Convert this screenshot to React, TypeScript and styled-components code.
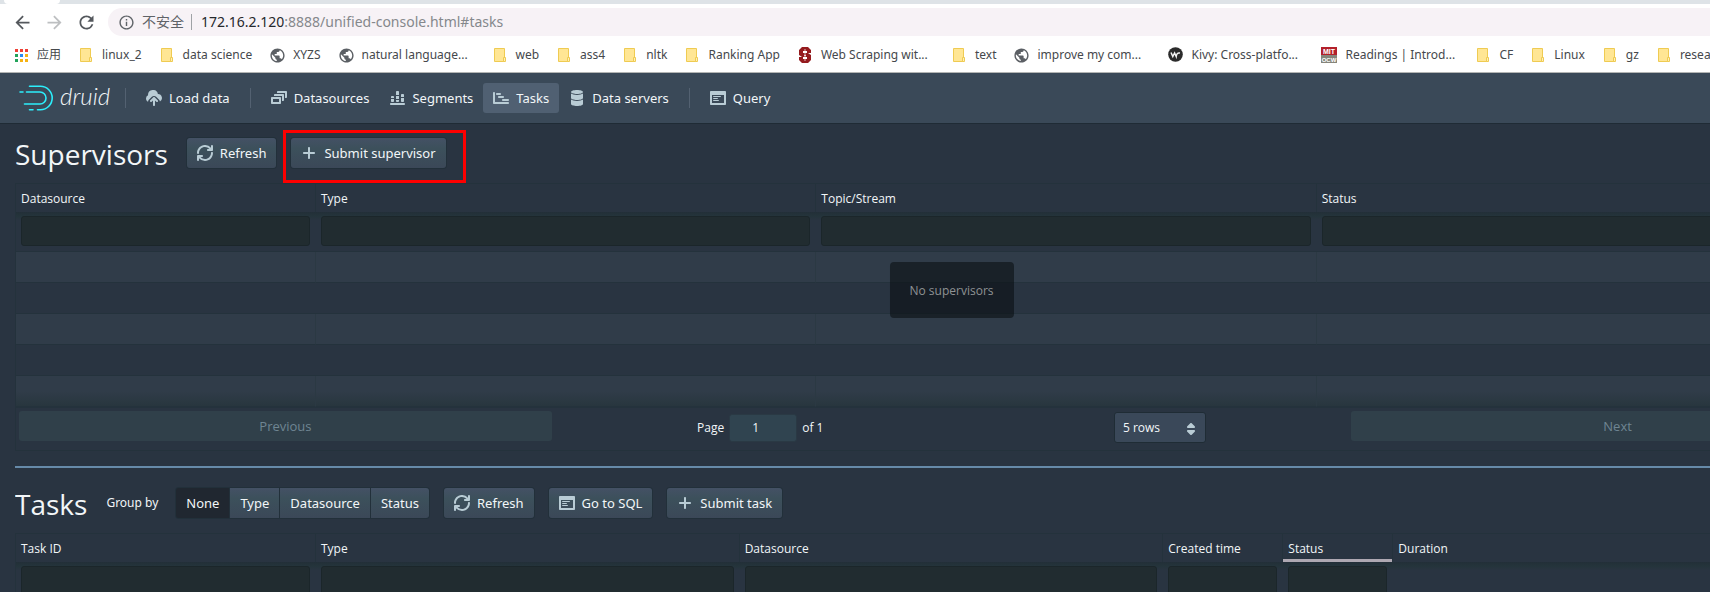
import React from "react";
import styled, { createGlobalStyle, css } from "styled-components";
import { MdArrowBack, MdArrowForward, MdInfoOutline, MdPublic, MdRefresh } from "react-icons/md";

const color = {
  page: "#293441",
  nav: "#3a4958",
  line: "#24323c",
  stripe: "#303c49",
  field: "#212c30",
  icon: "#b9ccd5",
  text: "#f2f6f8",
};

const GlobalStyle = createGlobalStyle`
  *, *::before, *::after { box-sizing: border-box; }
  body {
    margin: 0;
    background: ${color.page};
    color: ${color.text};
    font-family: "Noto Sans", "Noto Sans CJK SC", sans-serif;
    font-size: 13px;
    line-height: 18px;
  }
  button, input, select { font: inherit; color: inherit; margin: 0; }
  a { color: inherit; text-decoration: none; }
  svg { display: block; flex: none; }
`;

const Page = styled.div`
  height: 100vh;
  display: flex;
  flex-direction: column;
  overflow: hidden;
`;

/* ---------- browser chrome ---------- */

const TabStrip = styled.div`
  height: 4px;
  flex: none;
  background: #dee3e7;
  padding-left: 4px;
`;

const ActiveTab = styled.div`
  width: 56px;
  height: 4px;
  background: #fff;
  border-radius: 0 0 4px 4px;
`;

const AddressRow = styled.div`
  display: flex;
  flex: none;
  align-items: center;
  gap: 10px;
  background: #fff;
  padding: 4px 0 0 11px;
`;

const ChromeButton = styled.button<{ $muted?: boolean }>`
  width: 22px;
  height: 22px;
  padding: 0;
  border: 0;
  background: none;
  display: grid;
  place-items: center;
  color: ${(p) => (p.$muted ? "#bdbfc1" : "#54585d")};
`;

const AddressPill = styled.div`
  flex: 1;
  height: 28px;
  margin-left: 1px;
  padding-left: 10px;
  border-radius: 14px 0 0 14px;
  background: #f7f2f6;
  display: flex;
  align-items: center;
  font-size: 14px;
  line-height: 20px;
  color: #85888c;
  white-space: nowrap;
`;

const Security = styled.span`
  display: flex;
  align-items: center;
  gap: 7px;
  color: #5f6368;
  padding-right: 7px;
  border-right: 1px solid #9fa2a6;
  margin-right: 9px;
  height: 16px;
`;

const Host = styled.span`
  color: #25282c;
`;

const BookmarkBar = styled.nav`
  flex: none;
  display: flex;
  align-items: center;
  gap: 17px;
  height: 37px;
  padding: 1px 0 0 13px;
  overflow: hidden;
  background: #fff;
  border-bottom: 1px solid #b3b5b4;
  color: #45484c;
  font-size: 12px;
  white-space: nowrap;
`;

const Bookmark = styled.a<{ $long?: boolean }>`
  flex: none;
  display: flex;
  align-items: center;
  gap: 8px;
  ${(p) => p.$long && css`width: 137px;`}
`;

const BookmarkIcon = styled.span`
  width: 16px;
  height: 16px;
  display: grid;
  place-items: center;
  color: #5b5f64;
`;

const FolderIcon = () => (
  <svg width="12" height="14" viewBox="0 0 12 14">
    <path d="M.5.5h10v13H.5z" fill="#ffe694" stroke="#efcb52" />
    <path d="M9.5 9.5h2v4h-2z" fill="#fff0b8" stroke="#efcb52" />
  </svg>
);

const AppsIcon = () => (
  <svg width="14" height="14" viewBox="0 0 14 14">
    {["#ee4035", "#ee4035", "#ee4035", "#21a35a", "#2a8bf2", "#f6b213", "#21a35a", "#f6b213", "#f6b213"].map((c, i) => (
      <rect key={i} x={(i % 3) * 5 + 1} y={Math.floor(i / 3) * 5 + 1} width="3" height="3" fill={c} />
    ))}
  </svg>
);

const StanfordIcon = () => (
  <svg width="12" height="16" viewBox="0 0 12 16">
    <path d="M3 0h6l3 3v3H8V4H4v2h5l3 2v5l-3 3H3l-3-3v-3h4v2h4v-2H3L0 8V3z" fill="#951b1e" />
    <path d="M6 2v12M5 6l1-1 1 1M5 9l1-1 1 1" stroke="#fff" strokeWidth=".7" fill="none" />
  </svg>
);

const KivyIcon = () => (
  <svg width="15" height="15" viewBox="0 0 15 15">
    <circle cx="7.500" cy="7.500" r="7.300" fill="#2b2b2b" />
    <path d="M3 5.500l1.800 4 1.800-3.500 1.600 3.500c.4-3 1.500-4 3.800-3.500" stroke="#f4f4f4" strokeWidth="1.500" fill="none" />
  </svg>
);

const MitIcon = () => (
  <svg width="16" height="16" viewBox="0 0 16 16" fontFamily="Liberation Sans, sans-serif" fontWeight="700" fontSize="7">
    <rect width="16" height="8" fill="#b3202b" />
    <rect y="8" width="16" height="8" fill="#85857b" />
    <text x="8" y="6.500" textAnchor="middle" fill="#fff">MIT</text>
    <text x="8" y="14.500" textAnchor="middle" fontSize="6" fill="#fff">OCW</text>
  </svg>
);

const GlobeIcon = () => <MdPublic size={17} />;

const bookmarks: { label: string; icon: React.FC; long?: boolean }[] = [
  { label: "应用", icon: AppsIcon },
  { label: "linux_2", icon: FolderIcon },
  { label: "data science", icon: FolderIcon },
  { label: "XYZS", icon: GlobeIcon },
  { label: "natural language...", icon: GlobeIcon, long: true },
  { label: "web", icon: FolderIcon },
  { label: "ass4", icon: FolderIcon },
  { label: "nltk", icon: FolderIcon },
  { label: "Ranking App", icon: FolderIcon },
  { label: "Web Scraping wit...", icon: StanfordIcon, long: true },
  { label: "text", icon: FolderIcon },
  { label: "improve my com...", icon: GlobeIcon, long: true },
  { label: "Kivy: Cross-platfo...", icon: KivyIcon, long: true },
  { label: "Readings | Introd...", icon: MitIcon, long: true },
  { label: "CF", icon: FolderIcon },
  { label: "Linux", icon: FolderIcon },
  { label: "gz", icon: FolderIcon },
  { label: "resea", icon: FolderIcon },
];

/* ---------- icons ---------- */

const iconPaths = {
  upload:
    "M8.710 7.290C8.530 7.110 8.280 7 8 7s-.53.11-.71.29l-3 3a1.003 1.003 0 0 0 1.420 1.420L7 10.410V15c0 .55.45 1 1 1s1-.45 1-1v-4.590l1.290 1.290c.18.19.43.3.71.3a1.003 1.003 0 0 0 .71-1.710l-3-3zM12 4h-.1A5 5 0 0 0 2 5c0 .11.01.22.02.33A3.495 3.495 0 0 0 0 8.500c0 1.410.84 2.610 2.030 3.170.1-.8.45-1.400.85-1.800l3-3C6.440 6.310 7.170 6 8 6s1.560.31 2.120.87l3 3c.4.4.7.95.82 1.600A4 4 0 0 0 12 4z",
  layers:
    "M12 3.980H4c-.55 0-1 .45-1 1v1h8v5h1c.55 0 1-.45 1-1v-5c0-.55-.45-1-1-1zm3-3H7c-.55 0-1 .45-1 1v1h8v5h1c.55 0 1-.45 1-1v-5c0-.55-.45-1-1-1zm-6 6H1c-.55 0-1 .45-1 1v5c0 .55.45 1 1 1h8c.55 0 1-.45 1-1v-5c0-.55-.45-1-1-1zm-1 5H2v-3h6v3z",
  chart:
    "M10 2c0-.55-.45-1-1-1H8c-.55 0-1 .45-1 1v3h3V2zm3 10h1c.55 0 1-.45 1-1V8h-3v3c0 .55.45 1 1 1zm2-7c0-.55-.45-1-1-1h-1c-.55 0-1 .45-1 1v2h3V5zm-5 1H7v3h3V6zM5 7c0-.55-.45-1-1-1H3c-.55 0-1 .45-1 1v1h3V7zm3 5h1c.55 0 1-.45 1-1v-1H7v1c0 .55.45 1 1 1zm7 1H2c-.55 0-1 .45-1 1s.45 1 1 1h13c.55 0 1-.45 1-1s-.45-1-1-1zM3 12h1c.55 0 1-.45 1-1V9H2v2c0 .55.45 1 1 1z",
  gantt:
    "M4 5h3c.55 0 1-.45 1-1s-.45-1-1-1H4c-.55 0-1 .45-1 1s.45 1 1 1zm2 3h4c.55 0 1-.45 1-1s-.45-1-1-1H6c-.55 0-1 .45-1 1s.45 1 1 1zm4 1c-.55 0-1 .45-1 1s.45 1 1 1h5c.55 0 1-.45 1-1s-.45-1-1-1h-5zm5 3H2V3c0-.55-.45-1-1-1s-1 .45-1 1v10c0 .55.45 1 1 1h14c.55 0 1-.45 1-1s-.45-1-1-1z",
  database:
    "M8 4c3.310 0 6-.9 6-2s-2.690-2-6-2C4.680 0 2 .9 2 2s2.680 2 6 2zm-6-.48V8c0 1.100 2.690 2 6 2s6-.9 6-2V3.520C12.780 4.400 10.560 5 8 5s-4.780-.6-6-1.480zM2 9.520V14c0 1.100 2.690 2 6 2s6-.9 6-2V9.520C12.780 10.400 10.560 11 8 11s-4.780-.6-6-1.480z",
  application:
    "M3.500 7h7c.28 0 .5-.22.5-.5s-.22-.5-.5-.5h-7c-.28 0-.5.22-.5.5s.22.5.5.5zM15 1H1c-.55 0-1 .45-1 1v12c0 .55.45 1 1 1h14c.55 0 1-.45 1-1V2c0-.55-.45-1-1-1zm-1 12H2V5h12v8zM3.500 9h4c.28 0 .5-.22.5-.5S7.780 8 7.500 8h-4c-.28 0-.5.22-.5.5s.22.5.5.5zm0 2h5c.28 0 .5-.22.5-.5s-.22-.5-.5-.5h-5c-.28 0-.5.22-.5.5s.22.5.5.5z",
  refresh:
    "M14.990 6.990c-.55 0-1 .45-1 1 0 3.310-2.690 6-6 6-1.770 0-3.360-.78-4.460-2h1.460c.55 0 1-.45 1-1s-.45-1-1-1h-4c-.55 0-1 .45-1 1v4c0 .55.45 1 1 1s1-.45 1-1v-1.740a7.950 7.950 0 0 0 6 2.740c4.420 0 8-3.580 8-8 0-.55-.45-1-1-1zm0-7c-.55 0-1 .45-1 1v1.740a7.950 7.950 0 0 0-6-2.740c-4.420 0-8 3.580-8 8 0 .55.45 1 1 1s1-.45 1-1c0-3.310 2.690-6 6-6 1.770 0 3.360.78 4.460 2h-1.460c-.55 0-1 .45-1 1s.45 1 1 1h4c.55 0 1-.45 1-1v-4c0-.55-.45-1-1-1z",
  plus:
    "M13 7H9V3c0-.55-.45-1-1-1s-1 .45-1 1v4H3c-.55 0-1 .45-1 1s.45 1 1 1h4v4c0 .55.45 1 1 1s1-.45 1-1V9h4c.55 0 1-.45 1-1s-.45-1-1-1z",
  carets:
    "M5 7h6c.55 0 1-.45 1-1 0-.28-.11-.53-.29-.71l-3-3C8.530 2.110 8.280 2 8 2s-.53.11-.71.29l-3 3C4.110 5.470 4 5.720 4 6c0 .55.45 1 1 1zm6 2H5c-.55 0-1 .45-1 1 0 .28.11.53.29.71l3 3c.18.18.43.29.71.29s.53-.11.71-.29l3-3c.18-.18.29-.43.29-.71 0-.55-.45-1-1-1z",
};

const Icon = ({ name }: { name: keyof typeof iconPaths }) => (
  <svg width="16" height="16" viewBox="0 0 16 16" fill={color.icon} aria-hidden="true">
    <path d={iconPaths[name]} />
  </svg>
);

/* ---------- console header ---------- */

const Console = styled.div`
  flex: 1;
  min-height: 0;
  min-width: 1903px;
  display: flex;
  flex-direction: column;
`;

const NavBar = styled.nav`
  flex: none;
  display: flex;
  align-items: center;
  height: 51px;
  padding-left: 18px;
  background: ${color.nav};
  border-bottom: 1px solid #1f2b35;
`;

const Brand = styled.a`
  display: flex;
  align-items: center;
  width: 97px;
  gap: 6px;
  font-family: Lato, "Open Sans", sans-serif;
  font-weight: 300;
  font-style: italic;
  font-size: 24px;
  line-height: 28px;
`;

const BrandName = styled.span`
  padding-bottom: 4px;
`;

const NavItem = styled.a<{ $active?: boolean }>`
  display: flex;
  align-items: center;
  gap: 7px;
  height: 30px;
  padding: 0 10px;
  border-radius: 3px;
  background: ${(p) => (p.$active ? "#506072" : "transparent")};
`;

const NavDivider = styled.span`
  width: 1px;
  height: 20px;
  margin: 0 10px;
  background: #536171;
`;

const Logo = () => (
  <svg width="36" height="28" viewBox="0 0 36 28" fill="none" stroke="#2ceefb" strokeWidth="1.600" strokeLinecap="round">
    <path d="M11.500 2.300H22.500a11.700 11.700 0 0 1 0 23.400H19.500M11.500 25.700h3.500" />
    <path d="M2 8h3M8.500 8H22a6 6 0 0 1 0 12H6.500" />
  </svg>
);

/* ---------- panes ---------- */

const SupervisorPane = styled.section`
  flex: none;
  margin: 0 15px;
  padding: 14px 0 15px;
  border-bottom: 2px solid #668aa9;
`;

const TaskPane = styled.section`
  flex: 1;
  min-height: 0;
  overflow: hidden;
  margin: 0 15px;
  padding-top: 20px;
`;

const Controls = styled.header`
  display: flex;
  align-items: center;
  gap: 15px;
  height: 30px;
  margin-bottom: 15px;
`;

const Title = styled.h1`
  margin: 0;
  padding: 2px 4px 0 0;
  font-family: "Open Sans", sans-serif;
  font-size: 28px;
  line-height: 32px;
  font-weight: 400;
`;

const GroupLabel = styled.span`
  padding-right: 3px;
  font-size: 12px;
`;

const raised = css`
  background: linear-gradient(#445165, #3c505b 35%, #3b4858);
  box-shadow: 0 0 0 1px #22303a;
`;

const Button = styled.button`
  display: flex;
  align-items: center;
  gap: 7px;
  height: 30px;
  padding: 0 10px;
  border: 0;
  border-radius: 3px;
  white-space: nowrap;
  ${raised}
`;

const ButtonGroup = styled.div`
  display: flex;
  gap: 1px;
  border-radius: 3px;
  background: #22303a;
  box-shadow: 0 0 0 1px #22303a;
`;

const GroupButton = styled.button<{ $active?: boolean }>`
  height: 30px;
  padding: 0 10px;
  border: 0;
  background: ${(p) => (p.$active ? "#202730" : "linear-gradient(#445165, #3c505b 35%, #3b4858)")};
  &:first-child { border-radius: 3px 0 0 3px; }
  &:last-child { border-radius: 0 3px 3px 0; }
`;

const Highlighted = styled.div`
  position: relative;
  &::after {
    content: "";
    position: absolute;
    z-index: 2;
    top: -8px;
    right: -20px;
    bottom: -15px;
    left: -8px;
    border: 3px solid #fe0000;
    pointer-events: none;
  }
`;

/* ---------- tables ---------- */

const TableFrame = styled.div`
  position: relative;
  border: 1px solid ${color.line};
  font-family: "Open Sans", sans-serif;
`;

const Table = styled.table`
  width: 100%;
  table-layout: fixed;
  border-collapse: separate;
  border-spacing: 0;
`;

const HeadCell = styled.th<{ $sorted?: boolean }>`
  height: 28px;
  padding: 2px 5px 0;
  border-right: 1px solid ${color.line};
  box-shadow: ${(p) => (p.$sorted ? "inset 0 -3px #aea8b2" : "none")};
  font-size: 12px;
  font-weight: 400;
  text-align: left;
`;

const FilterCell = styled.td`
  height: 40px;
  padding: 4px 6px 4px 5px;
  border-bottom: 1px solid ${color.line};
  background: linear-gradient(#222f38, #24343b 4px, ${color.page} 8px);
  vertical-align: top;
`;

const FilterInput = styled.input`
  display: block;
  width: 100%;
  height: 30px;
  padding: 0 10px;
  border: 1px solid #1b262a;
  border-radius: 3px;
  background: ${color.field};
`;

const BodyRow = styled.tr`
  &:nth-child(odd) { background: ${color.stripe}; }
  &:nth-child(odd) td { border-right: 1px solid #2b3943; }
  &:last-child td { background: linear-gradient(transparent 50%, #28363e); }
`;

const BodyCell = styled.td`
  height: 31px;
  padding: 0;
  border-bottom: 1px solid ${color.line};
`;

const EmptyNotice = styled.div`
  position: absolute;
  top: 78px;
  left: 50%;
  transform: translateX(-50%);
  padding: 20px 20px 18px;
  border-radius: 4px;
  background: rgba(8, 14, 18, 0.58);
  color: #8f9294;
  font-size: 12px;
`;

const Pagination = styled.footer`
  display: flex;
  padding: 3px 3px 7px;
  border-top: 1px solid ${color.line};
`;

const PageButton = styled.button`
  flex: 1;
  height: 30px;
  padding: 0;
  border: 0;
  border-radius: 3px;
  background: #30404a;
  color: #6f8592;
`;

const PageControls = styled.div`
  flex: 1.5;
  display: flex;
  align-items: center;
  justify-content: space-around;
  font-size: 12px;
  padding-top: 1px;
`;

const PageInfo = styled.label`
  display: flex;
  align-items: center;
  gap: 5px;
`;

const PageInput = styled.input`
  width: 68px;
  height: 28px;
  padding: 0;
  border: 1px solid #2a3944;
  border-radius: 3px;
  background: #304450;
  text-align: center;
`;

const SelectBox = styled.label`
  position: relative;
  svg {
    position: absolute;
    top: 9px;
    right: 7px;
    pointer-events: none;
  }
`;

const Select = styled.select`
  display: block;
  appearance: none;
  width: 92px;
  height: 31px;
  padding: 1px 25px 0 8px;
  border: 1px solid #1f2c35;
  border-radius: 3px;
  background: #3a4859;
`;

interface Column {
  title: string;
  width?: number;
  filter?: boolean;
  sorted?: boolean;
}

const supervisorColumns: Column[] = [
  { title: "Datasource", width: 300, filter: true },
  { title: "Type", filter: true },
  { title: "Topic/Stream", filter: true },
  { title: "Status", filter: true },
  { title: "", width: 70 },
];

const taskColumns: Column[] = [
  { title: "Task ID", width: 300, filter: true },
  { title: "Type", filter: true },
  { title: "Datasource", filter: true },
  { title: "Created time", width: 120, filter: true },
  { title: "Status", width: 110, filter: true, sorted: true },
  { title: "Duration" },
  { title: "", width: 70 },
];

const DataTable = ({ columns, rows }: { columns: Column[]; rows: number }) => (
  <Table>
    <colgroup>
      {columns.map((c, i) => (
        <col key={i} width={c.width} />
      ))}
    </colgroup>
    <thead>
      <tr>
        {columns.map((c, i) => (
          <HeadCell key={i} scope="col" $sorted={c.sorted}>
            {c.title}
          </HeadCell>
        ))}
      </tr>
      <tr>
        {columns.map((c, i) => (
          <FilterCell key={i}>{c.filter && <FilterInput type="text" aria-label={`Filter ${c.title}`} />}</FilterCell>
        ))}
      </tr>
    </thead>
    <tbody>
      {Array.from({ length: rows }, (_, r) => (
        <BodyRow key={r}>
          {columns.map((c, i) => (
            <BodyCell key={i} />
          ))}
        </BodyRow>
      ))}
    </tbody>
  </Table>
);

export default function App() {
  return (
    <Page>
      <GlobalStyle />
      <TabStrip>
        <ActiveTab />
      </TabStrip>
      <AddressRow>
        <ChromeButton aria-label="Back">
          <MdArrowBack size={21} />
        </ChromeButton>
        <ChromeButton aria-label="Forward" $muted>
          <MdArrowForward size={21} />
        </ChromeButton>
        <ChromeButton aria-label="Reload">
          <MdRefresh size={21} />
        </ChromeButton>
        <AddressPill>
          <Security>
            <MdInfoOutline size={17} />
            不安全
          </Security>
          <Host>172.16.2.120</Host>:8888/unified-console.html#tasks
        </AddressPill>
      </AddressRow>
      <BookmarkBar aria-label="Bookmarks">
        {bookmarks.map(({ label, icon: Glyph, long }) => (
          <Bookmark key={label} href="#" $long={long}>
            <BookmarkIcon>
              <Glyph />
            </BookmarkIcon>
            {label}
          </Bookmark>
        ))}
      </BookmarkBar>
      <Console>
        <NavBar>
          <Brand href="#">
            <Logo />
            <BrandName>druid</BrandName>
          </Brand>
          <NavDivider />
          <NavItem href="#load-data"><Icon name="upload" />Load data</NavItem>
          <NavDivider />
          <NavItem href="#datasources"><Icon name="layers" />Datasources</NavItem>
          <NavItem href="#segments"><Icon name="chart" />Segments</NavItem>
          <NavItem href="#tasks" $active><Icon name="gantt" />Tasks</NavItem>
          <NavItem href="#servers"><Icon name="database" />Data servers</NavItem>
          <NavDivider />
          <NavItem href="#query"><Icon name="application" />Query</NavItem>
        </NavBar>
        <SupervisorPane>
          <Controls>
            <Title>Supervisors</Title>
            <Button><Icon name="refresh" />Refresh</Button>
            <Highlighted>
              <Button><Icon name="plus" />Submit supervisor</Button>
            </Highlighted>
          </Controls>
          <TableFrame>
            <DataTable columns={supervisorColumns} rows={5} />
            <EmptyNotice>No supervisors</EmptyNotice>
            <Pagination>
              <PageButton disabled>Previous</PageButton>
              <PageControls>
                <PageInfo>
                  Page
                  <PageInput type="number" defaultValue={1} />
                  of 1
                </PageInfo>
                <SelectBox>
                  <Select aria-label="Rows per page" defaultValue="5">
                    <option value="5">5 rows</option>
                    <option value="10">10 rows</option>
                    <option value="20">20 rows</option>
                  </Select>
                  <Icon name="carets" />
                </SelectBox>
              </PageControls>
              <PageButton disabled>Next</PageButton>
            </Pagination>
          </TableFrame>
        </SupervisorPane>
        <TaskPane>
          <Controls>
            <Title>Tasks</Title>
            <GroupLabel>Group by</GroupLabel>
            <ButtonGroup>
              <GroupButton $active>None</GroupButton>
              <GroupButton>Type</GroupButton>
              <GroupButton>Datasource</GroupButton>
              <GroupButton>Status</GroupButton>
            </ButtonGroup>
            <Button><Icon name="refresh" />Refresh</Button>
            <Button><Icon name="application" />Go to SQL</Button>
            <Button><Icon name="plus" />Submit task</Button>
          </Controls>
          <TableFrame>
            <DataTable columns={taskColumns} rows={5} />
          </TableFrame>
        </TaskPane>
      </Console>
    </Page>
  );
}
